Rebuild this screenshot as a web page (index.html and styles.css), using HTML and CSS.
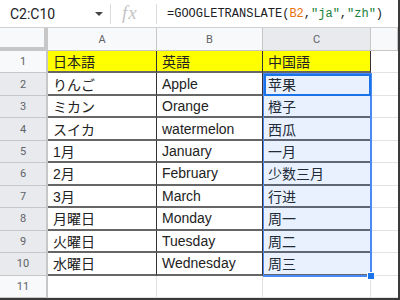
FILE: index.html
```html
<!DOCTYPE html>
<html>
<head>
  <meta charset="UTF-8">
  <title>GOOGLETRANSLATE</title>
  <link rel="stylesheet" href="styles.css">
</head>
<body>
  <div class="window">
    <div class="formula-bar">
      <div class="name-box">
        <span class="name">C2:C10</span>
        <span class="caret"></span>
      </div>
      <div class="fx">fx</div>
      <div class="formula">=GOOGLETRANSLATE(<span class="ref">B2</span>,<span class="str">"ja"</span>,<span class="str">"zh"</span>)</div>
    </div>

    <div class="sheet">
      <div class="corner"></div>
      <div class="col-head">A</div>
      <div class="col-head">B</div>
      <div class="col-head sel">C</div>
      <div class="col-head"></div>

      <div class="row-head">1</div>
      <div class="cell ja head">日本語</div>
      <div class="cell head">英語</div>
      <div class="cell ja head">中国語</div>
      <div class="cell blank"></div>

      <div class="row-head sel">2</div>
      <div class="cell ja">りんご</div>
      <div class="cell">Apple</div>
      <div class="cell zh">苹果</div>
      <div class="cell blank"></div>

      <div class="row-head sel">3</div>
      <div class="cell ja">ミカン</div>
      <div class="cell">Orange</div>
      <div class="cell zh">橙子</div>
      <div class="cell blank"></div>

      <div class="row-head sel">4</div>
      <div class="cell ja">スイカ</div>
      <div class="cell">watermelon</div>
      <div class="cell zh">西瓜</div>
      <div class="cell blank"></div>

      <div class="row-head sel">5</div>
      <div class="cell ja">1月</div>
      <div class="cell">January</div>
      <div class="cell zh">一月</div>
      <div class="cell blank"></div>

      <div class="row-head sel">6</div>
      <div class="cell ja">2月</div>
      <div class="cell">February</div>
      <div class="cell zh">少数三月</div>
      <div class="cell blank"></div>

      <div class="row-head sel">7</div>
      <div class="cell ja">3月</div>
      <div class="cell">March</div>
      <div class="cell zh">行进</div>
      <div class="cell blank"></div>

      <div class="row-head sel">8</div>
      <div class="cell ja">月曜日</div>
      <div class="cell">Monday</div>
      <div class="cell zh">周一</div>
      <div class="cell blank"></div>

      <div class="row-head sel">9</div>
      <div class="cell ja">火曜日</div>
      <div class="cell">Tuesday</div>
      <div class="cell zh">周二</div>
      <div class="cell blank"></div>

      <div class="row-head sel">10</div>
      <div class="cell ja">水曜日</div>
      <div class="cell">Wednesday</div>
      <div class="cell zh">周三</div>
      <div class="cell blank"></div>

      <div class="row-head">11</div>
      <div class="cell empty"></div>
      <div class="cell empty"></div>
      <div class="cell empty"></div>
      <div class="cell blank"></div>

      <!-- selection C2:C10 sits over the grid -->
      <div class="selection">
        <div class="active"></div>
        <div class="handle"></div>
      </div>
    </div>
  </div>
</body>
</html>
```

FILE: styles.css
```css
/* reset things */
* {
  margin: 0; padding: 0;
  box-sizing: border-box;
}
html, body {
  width: 400px;
  height: 300px;
  overflow: hidden;
  background: #fff;
}

.window {
  width: 400px;
  height: 300px;
  border-right: 2px solid #3a3a3a;
  border-bottom: 2px solid #3a3a3a;
  display: flex;
  flex-direction: column;
  font: normal 14px "Liberation Sans", Arial, sans-serif;
  color: #222;
}

/* formula bar */
.formula-bar {
  display: flex;
  align-items: center;
  height: 28px;
  border-bottom: 1px solid #d0d0d0;
}
  .name-box {
    display: flex;
    align-items: center;
    width: 111px;
    height: 20px;
    padding: 0 7px 0 10px;
    border-right: 1px solid #dadce0;
  }
    .name-box .name {
      flex: 1;
      font: normal 14px Roboto, "Liberation Sans", sans-serif;
      color: #202124;
    }
    .name-box .caret {
      width: 0;
      height: 0;
      border-left: 4px solid transparent;
      border-right: 4px solid transparent;
      border-top: 4px solid #444;
    }
  .fx {
    width: 46px;
    height: 20px;
    padding-left: 11px;
    border-right: 1px solid #dadce0;
    font: italic 19px/18px "Liberation Serif", serif;
    color: #c4c4c4;
    letter-spacing: 1px;
  }
  .formula {
    padding-left: 10px;
    font: normal 12px "Liberation Mono", monospace;
    color: #202124;
    white-space: nowrap;
  }
    .formula .ref { color: #e8710a; }
    .formula .str { color: #188038; }

/* grid */
.sheet {
  position: relative;
  flex: 1;
  display: grid;
  grid-template-columns: 48px 109px 106px 108px 1fr;
  grid-template-rows: 23px repeat(11, 1fr);
}

.corner {
  background: #f8f9fa;
  border-right: 4px solid #c7c7c7;
  border-bottom: 4px solid #c7c7c7;
}
.col-head {
  display: flex;
  align-items: center;
  justify-content: center;
  background: #f8f9fa;
  border-right: 1px solid #c7c7c7;
  border-bottom: 1px solid #c7c7c7;
  font: normal 11px Roboto, "Liberation Sans", sans-serif;
  color: #5f6368;
}
  .col-head.sel { background: #e8eaed; }
.row-head {
  display: flex;
  align-items: center;
  justify-content: center;
  background: #f8f9fa;
  border-right: 2px solid #c7c7c7;
  border-bottom: 1px solid #c7c7c7;
  font: normal 11px Roboto, "Liberation Sans", sans-serif;
  color: #5f6368;
}
  .row-head.sel { background: #e8eaed; }

.cell {
  display: flex;
  align-items: center;
  padding-left: 5px;
  border-right: 1px solid #333;
  border-bottom: 2px solid #666;
  white-space: nowrap;
  overflow: hidden;
}
  .cell.ja { font-family: "Liberation Sans", "Noto Sans CJK JP", sans-serif; }
  .cell.zh { font-family: "Liberation Sans", "Noto Sans CJK SC", sans-serif; }
  .cell.head {
    background: #ffff00;
    font-family: "Liberation Sans", "Noto Sans CJK JP", sans-serif;
  }
  .cell.empty {
    border-right: 1px solid #e2e2e2;
    border-bottom: 1px solid #e2e2e2;
  }
  .cell.blank {
    border-right: none;
    border-bottom: 1px solid #e2e2e2;
  }

/* selection overlay */
.selection {
  position: absolute;
  left: 263px;
  width: 109px;
  top: calc(23px + (100% - 23px) / 11);
  height: calc((100% - 23px) / 11 * 9 + 1px);
  border: 2px solid #4a8af4;
  border-left-width: 1px;
  background: rgba(26, 115, 232, 0.1);
  pointer-events: none;
}
  .selection .active {
    height: calc(100% / 9 - 1px);
    border: 2px solid #1a73e8;
    margin: -1px -1px 0 0;
  }
  .selection .handle {
    position: absolute;
    right: -5px;
    bottom: -5px;
    width: 8px;
    height: 8px;
    background: #1a73e8;
    border: 1px solid #fff;
  }
```
